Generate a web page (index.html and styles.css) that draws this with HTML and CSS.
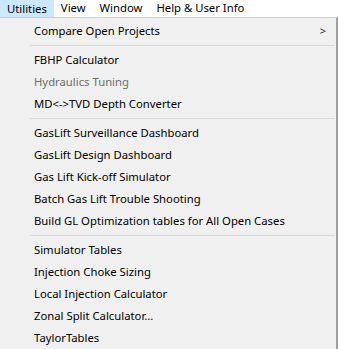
FILE: index.html
```html
<!DOCTYPE html>
<html lang="en">
<head>
    <meta charset="UTF-8">
    <meta name="viewport" content="width=device-width, initial-scale=1.0">
    <title>Utilities Menu</title>
    <link rel="stylesheet" href="styles.css">
</head>
<body>

    <div class="menubar">
        <span class="top-item active">Utilities</span>
        <span class="top-item">View</span>
        <span class="top-item">Window</span>
        <span class="top-item">Help &amp; User Info</span>
    </div>

    <div class="dropdown">
        <div class="item">Compare Open Projects <span class="arrow">&gt;</span></div>
        <div class="sep"></div>

        <div class="item">FBHP Calculator</div>
        <div class="item disabled">Hydraulics Tuning</div>
        <div class="item">MD&lt;-&gt;TVD Depth Converter</div>
        <div class="sep"></div>

        <div class="item">GasLift Surveillance Dashboard</div>
        <div class="item">GasLift Design Dashboard</div>
        <div class="item">Gas Lift Kick-off Simulator</div>
        <div class="item">Batch Gas Lift Trouble Shooting</div>
        <div class="item">Build GL Optimization tables for All Open Cases</div>
        <div class="sep"></div>

        <div class="item">Simulator Tables</div>
        <div class="item">Injection Choke Sizing</div>
        <div class="item">Local Injection Calculator</div>
        <div class="item">Zonal Split Calculator...</div>
        <div class="item">TaylorTables</div>
    </div>

</body>
</html>
```

FILE: styles.css
```css
body {
    margin: 0;
    font-family: "Noto Sans", Arial, sans-serif;
    font-size: 11.3px;
    color: #000;
    background-color: #fff;
}
.menubar {
    display: flex;
    height: 17px;
    background-color: #fff;
}
.top-item {
    padding: 0 7px;
    line-height: 16px;
    height: 17px;
    box-sizing: border-box;
}
.top-item.active {
    background-color: #cce8ff;
    border: 1px solid #cce8ff;
    padding: 0 6px;
    line-height: 15px;
}
.dropdown {
    width: 338px;
    box-sizing: border-box;
    background-color: #f0f0f0;
    border-top: 1px solid #cccccc;
    border-right: 2px solid #a0a0a0;
    padding-top: 2px;
}
.item {
    display: flex;
    align-items: center;
    height: 22px;
    box-sizing: border-box;
    padding: 0 10px 1px 34px;
}
.item.disabled {
    color: #6d6d6d;
}
.arrow {
    margin-left: auto;
    font-size: 11px;
    color: #333;
}
.sep {
    height: 1px;
    margin: 3px 1px 3px 30px;
    background-color: #d7d7d7;
}
```
